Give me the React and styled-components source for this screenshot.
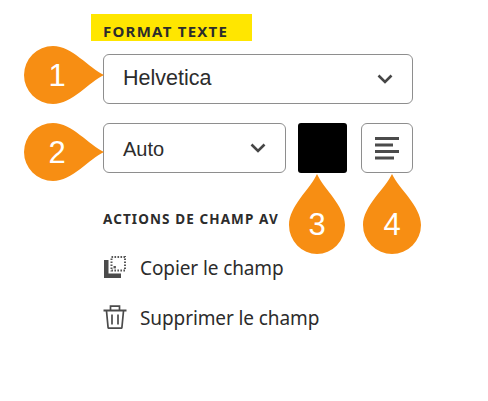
import React from 'react';
import styled, { createGlobalStyle } from 'styled-components';

const Global = createGlobalStyle`
  html, body { margin: 0; padding: 0; background: #fff; }
  body { font-family: "Liberation Sans", Arial, sans-serif; }
`;

const Page = styled.div`
  position: relative;
  width: 488px;
  height: 401px;
  overflow: hidden;
  box-sizing: border-box;
  padding: 14px 75px 0 103px;
  background: #fff;
  display: flex;
  flex-direction: column;
`;

const Highlight = styled.h2`
  margin: 0 0 13px -12px;
  padding: 0 0 0 12px;
  width: 161px;
  height: 27px;
  box-sizing: border-box;
  background: #ffe600;
  color: #2c2c2c;
  font: 700 15px/34px "Noto Sans", sans-serif;
  letter-spacing: 1.25px;
  white-space: nowrap;
`;

const Field = styled.div`
  box-sizing: border-box;
  height: 50px;
  border: 1px solid #8e8e8e;
  border-radius: 6px;
  background: #fff;
  color: #2c2c2c;
  display: flex;
  align-items: center;
  justify-content: space-between;
`;

const Select = styled(Field)`
  width: ${p => p.$width}px;
  padding: 0 19px;
  font-size: ${p => p.$size}px;
`;

const SelectLabel = styled.span`
  position: relative;
  top: ${p => p.$nudge || 0}px;
`;

const Row = styled.div`
  display: flex;
  margin-top: 19px;
  align-items: flex-start;
`;

const Swatch = styled.div`
  width: 49px;
  height: 50px;
  margin-left: 12px;
  background: #000;
  border-radius: 3px;
`;

const AlignButton = styled(Field)`
  width: 52px;
  margin-left: 14px;
  justify-content: center;
`;

const SectionTitle = styled.h3`
  margin: 37px 0 0;
  color: #2c2c2c;
  font: 700 13.5px/18px "Noto Sans", sans-serif;
  letter-spacing: 1.1px;
  white-space: nowrap;
`;

const Actions = styled.div`
  margin-top: 26px;
  display: flex;
  flex-direction: column;
  gap: 22px;
`;

const Action = styled.div`
  display: flex;
  align-items: center;
  height: 28px;
  color: #2c2c2c;
  font: 400 19px/28px "Noto Sans", sans-serif;
  letter-spacing: -0.1px;
`;

const ActionIcon = styled.span`
  display: flex;
  width: 37px;
  margin-top: -3px;
  padding-left: ${p => p.$inset || 0}px;
  box-sizing: border-box;
`;

const Pin = styled.div`
  position: absolute;
  left: ${p => p.$x}px;
  top: ${p => p.$y}px;
  width: ${p => p.$w}px;
  height: ${p => p.$h}px;
  display: flex;
  align-items: center;
  justify-content: center;
  color: #fff;
  font: 400 31px/1 "Liberation Sans", sans-serif;
`;

const PinShape = styled.svg`
  position: absolute;
  left: 0;
  top: 0;
  width: 100%;
  height: 100%;
`;

const PinLabel = styled.span`
  position: relative;
  left: ${p => p.$dx || 0}px;
  top: ${p => p.$dy || 0}px;
`;

const Chevron = () => (
  <svg width="16" height="10" viewBox="0 0 16 10" fill="none">
    <path d="M1.5 1.5 8 8l6.5-6.5" stroke="#464646" strokeWidth="2.6" />
  </svg>
);

const AlignIcon = () => (
  <svg width="24" height="23" viewBox="0 0 24 23" fill="#4b4b4b">
    <rect x="0" y="0" width="24" height="3" />
    <rect x="0" y="6.5" width="18" height="3" />
    <rect x="0" y="13" width="24" height="3" />
    <rect x="0" y="19.5" width="19" height="3" />
  </svg>
);

const CopyIcon = () => (
  <svg width="22" height="22" viewBox="0 0 22 22" fill="none">
    <path d="M0 4h4.5v13.5H17V22H0z" fill="#4b4b4b" />
    <rect x="7.5" y="1" width="13.5" height="13.5" stroke="#555" strokeWidth="2" strokeDasharray="1.6 1.4" />
    <rect x="9.5" y="10" width="2.4" height="2.4" fill="#555" />
  </svg>
);

const TrashIcon = () => (
  <svg width="24" height="24" viewBox="0 0 24 24" fill="none" stroke="#4b4b4b" strokeWidth="1.7">
    <path d="M0.5 5.5h23" strokeWidth="2" />
    <path d="M7.5 5V1.2h9V5" />
    <path d="M3.5 6l1.6 16.6c0 .4.4.6.8.6h12.2c.4 0 .8-.2.8-.6L20.5 6" />
    <path d="M9 9.5v10M15 9.5v10" />
  </svg>
);

const Drop = () => (
  <PinShape viewBox="0 0 58 80" preserveAspectRatio="none">
    <path d="M29 0C36 15 58 32 58 51A29 29 0 0 1 0 51C0 32 22 15 29 0Z" fill="#f78e13" />
  </PinShape>
);

const SidePin = ({ y, children }) => (
  <Pin $x={24} $y={y} $w={80} $h={58}>
    <PinShape viewBox="0 0 80 58">
      <path d="M80 29C65 36 48 58 29 58A29 29 0 0 1 29 0C48 0 65 22 80 29Z" fill="#f78e13" />
    </PinShape>
    <PinLabel $dx={-7}>{children}</PinLabel>
  </Pin>
);

const TopPin = ({ x, w, children }) => (
  <Pin $x={x} $y={174} $w={w} $h={80}>
    <Drop />
    <PinLabel $dy={10}>{children}</PinLabel>
  </Pin>
);

export default function App() {
  return (
    <Page>
      <Global />
      <Highlight>FORMAT TEXTE</Highlight>
      <Select $width={310} $size={21.5}>
        <SelectLabel $nudge={-1}>Helvetica</SelectLabel>
        <Chevron />
      </Select>
      <Row>
        <Select $width={183} $size={20}>
          <SelectLabel $nudge={1}>Auto</SelectLabel>
          <Chevron />
        </Select>
        <Swatch />
        <AlignButton>
          <AlignIcon />
        </AlignButton>
      </Row>
      <SectionTitle>ACTIONS DE CHAMP AV</SectionTitle>
      <Actions>
        <Action>
          <ActionIcon $inset={1}>
            <CopyIcon />
          </ActionIcon>
          Copier le champ
        </Action>
        <Action>
          <ActionIcon>
            <TrashIcon />
          </ActionIcon>
          Supprimer le champ
        </Action>
      </Actions>
      <SidePin y={46}>1</SidePin>
      <SidePin y={123}>2</SidePin>
      <TopPin x={289} w={56}>3</TopPin>
      <TopPin x={363} w={58}>4</TopPin>
    </Page>
  );
}
